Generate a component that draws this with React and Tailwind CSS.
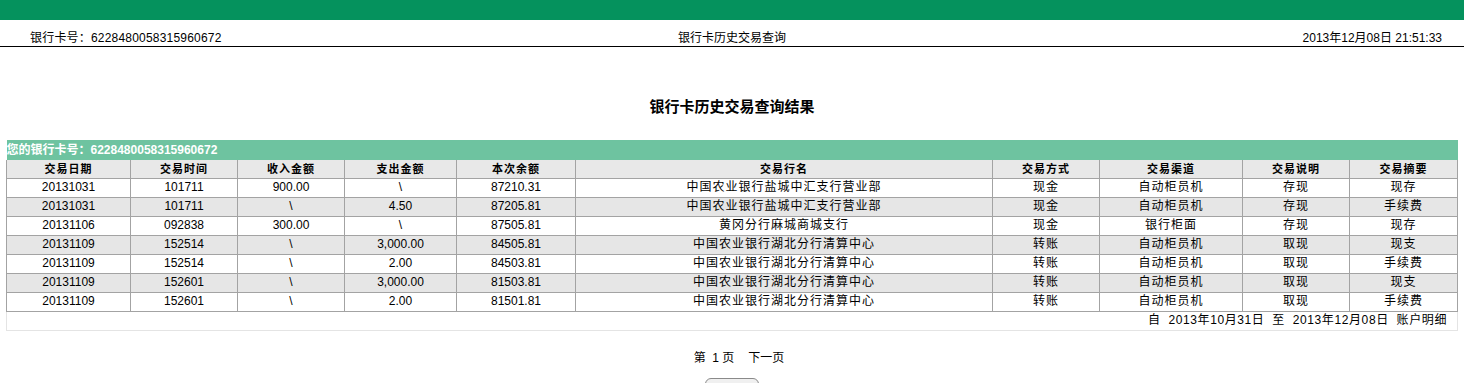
import React from "react";

const rows = [
  ["20131031", "101711", "900.00", "\\", "87210.31", "中国农业银行盐城中汇支行营业部", "现金", "自动柜员机", "存现", "现存"],
  ["20131031", "101711", "\\", "4.50", "87205.81", "中国农业银行盐城中汇支行营业部", "现金", "自动柜员机", "存现", "手续费"],
  ["20131106", "092838", "300.00", "\\", "87505.81", "黄冈分行麻城商城支行", "现金", "银行柜面", "存现", "现存"],
  ["20131109", "152514", "\\", "3,000.00", "84505.81", "中国农业银行湖北分行清算中心", "转账", "自动柜员机", "取现", "现支"],
  ["20131109", "152514", "\\", "2.00", "84503.81", "中国农业银行湖北分行清算中心", "转账", "自动柜员机", "取现", "手续费"],
  ["20131109", "152601", "\\", "3,000.00", "81503.81", "中国农业银行湖北分行清算中心", "转账", "自动柜员机", "取现", "现支"],
  ["20131109", "152601", "\\", "2.00", "81501.81", "中国农业银行湖北分行清算中心", "转账", "自动柜员机", "取现", "手续费"],
];

const headers = ["交易日期", "交易时间", "收入金额", "支出金额", "本次余额", "交易行名", "交易方式", "交易渠道", "交易说明", "交易摘要"];
const widths = ["w-[124px]", "w-[107px]", "w-[107px]", "w-[112px]", "w-[119px]", "w-[417px]", "w-[107px]", "w-[143px]", "w-[107px]", "w-[108px]"];

// cells holding Chinese text run a little wider in the original
const isCjk = (s) => /[\u4e00-\u9fff]/.test(s);

export default function App() {
  return (
    <div className="w-full h-[383px] overflow-hidden bg-white text-black font-['Liberation_Sans','Noto_Sans_CJK_SC',sans-serif] text-[12px]">
      {/* TOP BAR */}
      <div className="h-[20px] bg-[#05925d]" />

      {/* HEADER LINE */}
      <div className="grid h-[27px] grid-cols-[1fr_auto_1fr] items-end border-b border-black px-[22px] leading-[15px]">
        <span className="ml-[8px] tracking-[0.2px]">银行卡号：6228480058315960672</span>
        <span className="text-center">银行卡历史交易查询</span>
        <span className="text-right">2013年12月08日 21:51:33</span>
      </div>

      {/* TITLE */}
      <h1 className="mt-[51px] text-center text-[15px] font-bold leading-[18px]">银行卡历史交易查询结果</h1>

      {/* RESULT TABLE */}
      <table className="ml-[6px] mt-[24px] w-[1451px] table-fixed border-collapse">
        <colgroup>
          {widths.map((w, i) => (
            <col key={i} className={w} />
          ))}
        </colgroup>
        <thead>
          <tr className="h-[20px] bg-[#6ec3a0]">
            <th colSpan={10} className="text-left text-[12px] font-bold text-white leading-[20px] pl-0">
              您的银行卡号：6228480058315960672
            </th>
          </tr>
          <tr className="h-[18px] bg-[#e8e8e8]">
            {headers.map((h) => (
              <th key={h} className="border border-[#a3a3a3] border-t-0 text-center text-[11px] font-bold leading-[16px] tracking-[1px]">
                {h}
              </th>
            ))}
          </tr>
        </thead>
        <tbody>
          {rows.map((r, i) => (
            <tr key={i} className={i % 2 === 1 ? "h-[19px] bg-[#e6e6e6]" : "h-[19px] bg-white"}>
              {r.map((c, j) => (
                <td
                  key={j}
                  className={
                    isCjk(c)
                      ? "border border-[#a3a3a3] text-center leading-[17px] p-0 tracking-[1px]"
                      : "border border-[#a3a3a3] text-center leading-[17px] p-0"
                  }
                >
                  {c}
                </td>
              ))}
            </tr>
          ))}
          <tr className="h-[19px]">
            <td colSpan={10} className="border border-t-0 border-[#e4e4e4] pr-[10px] text-right leading-[17px] tracking-[0.6px]">
              自&nbsp;&nbsp;2013年10月31日&nbsp;&nbsp;至&nbsp;&nbsp;2013年12月08日&nbsp;&nbsp;账户明细
            </td>
          </tr>
        </tbody>
      </table>

      {/* PAGINATION */}
      <div className="mt-[19px] flex justify-center gap-[14px] pl-[14px] leading-[16px]">
        <span>第&nbsp;&nbsp;1&nbsp;页</span>
        <span>下一页</span>
      </div>
      <div className="mt-[12px] flex justify-center">
        <button className="h-[24px] w-[54px] rounded-[6px] border border-[#8a8a8a] bg-[#f0f0f0]" />
      </div>
    </div>
  );
}
